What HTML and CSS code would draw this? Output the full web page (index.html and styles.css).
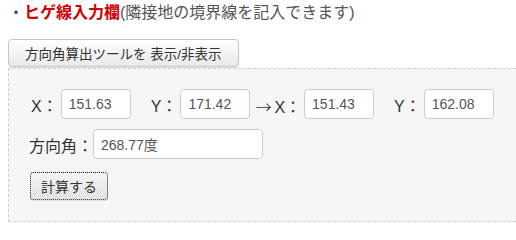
FILE: index.html
```html
<!DOCTYPE html>
<html lang="ja">
<head>
<meta charset="utf-8">
<link rel="stylesheet" href="styles.css">
</head>
<body>
<p class="title"><span class="dot">・</span><strong class="hl">ヒゲ線入力欄</strong><span class="note">(隣接地の境界線を記入できます)</span></p>
<button class="toggle" type="button">方向角算出ツールを 表示/非表示</button>
<div class="tool">
  <div class="row">
    <span class="lbl first">X：</span><input class="num" type="text" value="151.63">
    <span class="lbl sep">Y：</span><input class="num" type="text" value="171.42">
    <span class="lbl arrow"><span class="arr">→</span>X：</span><input class="num" type="text" value="151.43">
    <span class="lbl sep">Y：</span><input class="num" type="text" value="162.08">
  </div>
  <div class="row row2">
    <span class="lbl kanji">方向角：</span><input class="angle" type="text" value="268.77度">
  </div>
  <button class="calc" type="button">計算する</button>
</div>
</body>
</html>
```
FILE: styles.css
```css
html {
  overflow: hidden;
}
body {
  margin: 0 0 0 8px;
  font-family: "Liberation Sans", "Noto Sans CJK JP", sans-serif;
  color: #333;
  background: #fff;
}
.title {
  margin: 0;
  font-size: 16px;
  line-height: 25px;
  color: #555;
  white-space: nowrap;
}
.dot {
  color: #444;
}
.hl {
  color: #d00000;
  font-weight: bold;
}
.toggle {
  display: block;
  margin-top: 14px;
  height: 28px;
  padding: 0 16px 0 16px;
  font-family: "Liberation Sans", "Noto Sans CJK JP", sans-serif;
  font-size: 13.5px;
  color: #333;
  background: linear-gradient(#ffffff, #e9e9e9);
  border: 1px solid #c6c6c6;
  border-radius: 4px;
  box-shadow: 0 1px 1px rgba(0,0,0,0.12);
  white-space: nowrap;
}
.tool {
  margin-top: 1px;
  border: 1px dashed #cfcfcf;
  border-right: none;
  background: #f6f6f6;
  padding: 20px 0 21px 21px;
}
.row {
  display: flex;
  align-items: center;
  white-space: nowrap;
}
.row2 {
  margin-top: 10px;
}
.lbl {
  font-size: 16px;
  line-height: 20px;
  padding-top: 5px;
  color: #333;
  margin-right: 3px;
}
.lbl.first {
  margin-left: 1px;
}
.lbl.sep {
  margin-left: 20px;
}
.lbl.arrow {
  margin-left: 5px;
}
.arr {
  font-family: "Noto Sans CJK JP", sans-serif;
  font-weight: 300;
  margin-right: 3px;
}
.lbl.kanji {
  margin-left: -1px;
  margin-right: 0;
}
.num, .angle {
  box-sizing: border-box;
  height: 30px;
  padding: 0 7px;
  font-family: "Liberation Sans", "Noto Sans CJK JP", sans-serif;
  font-size: 14px;
  color: #555;
  background: #fff;
  border: 1px solid #cccccc;
  border-radius: 4px;
  outline: none;
}
.num {
  width: 70px;
}
.angle {
  width: 170px;
}
.calc {
  display: block;
  margin-top: 13px;
  height: 28px;
  padding: 0 10px;
  font-family: "Liberation Sans", "Noto Sans CJK JP", sans-serif;
  font-size: 14px;
  color: #333;
  background: linear-gradient(#f4f4f4, #e2e2e2);
  border: 1px dotted #222;
  border-radius: 3px;
  box-shadow: 0 1px 1px rgba(0,0,0,0.1);
}
```
